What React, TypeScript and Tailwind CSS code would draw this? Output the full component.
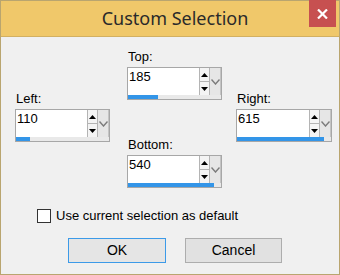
import React from 'react';

type SpinProps = { label: string; value: string; fill: number; wide?: boolean };

function SpinField({ label, value, fill, wide }: SpinProps) {
  return (
    <div className="flex flex-col">
      <div className="h-[16px] leading-[16px] pl-[1px] text-[13px] text-black">{label}</div>
      <div className={`mt-[2px] flex h-[33px] flex-col border border-[#a7a7a7] bg-white ${wide ? 'w-[96px]' : 'w-[95px]'}`}>
        <div className="flex flex-1">
          <div className="flex-1 pl-[1px] pt-[1px] text-[13px] leading-[16px] text-black">{value}</div>
          <div className="flex w-[11px] flex-col border-x border-[#b4b4b4] bg-[#f4f4f4]">
            <div className="flex flex-1 items-center justify-center border-b border-[#b4b4b4]">
              <svg width="7" height="4" viewBox="0 0 7 4">
                <path d="M0 4 L3.5 0 L7 4 Z" fill="#000" />
              </svg>
            </div>
            <div className="flex flex-1 items-center justify-center">
              <svg width="7" height="4" viewBox="0 0 7 4">
                <path d="M0 0 L3.5 4 L7 0 Z" fill="#000" />
              </svg>
            </div>
          </div>
          <div className="flex w-[11px] items-center justify-center border-r border-[#c4c4c4] bg-[#e6e6e6]">
            <svg width="9" height="6" viewBox="0 0 9 6">
              <path d="M0.5 0.5 L4.5 5 L8.5 0.5" fill="none" stroke="#7b7b7b" strokeWidth="1.4" />
            </svg>
          </div>
        </div>
        <div className="h-[4px] bg-[#e9e9e9]">
          <div className="h-full bg-[#3395e8]" style={{ width: `${fill}px` }} />
        </div>
      </div>
    </div>
  );
}

export default function App() {
  return (
    <div
      className="flex h-[275px] w-[340px] flex-col border border-[#b9a56f] bg-[#f0f0f0]"
      style={{ fontFamily: '"Liberation Sans", Arial, sans-serif' }}
    >
      {/* title bar */}
      <div className="relative flex h-[36px] items-center justify-center border-b border-[#d2b062] bg-[#f0c86a]">
        <span
          className="pl-[10px] text-[18px] text-[#2a2a2a]"
          style={{ fontFamily: '"Noto Sans", "Open Sans", sans-serif' }}
        >
          Custom Selection
        </span>
        <div className="absolute right-[3px] top-[-1px] flex h-[27px] w-[27px] items-center justify-center bg-[#c75050]">
          <svg width="11" height="10" viewBox="0 0 11 10">
            <path d="M1 0.5 L10 9.5 M10 0.5 L1 9.5" stroke="#fff" strokeWidth="2.2" />
          </svg>
        </div>
      </div>

      {/* body */}
      <div className="flex flex-1 flex-col">
        <div className="flex items-center pl-[14px] pt-[12px]">
          <div className="mb-[4px]">
            <SpinField label="Left:" value="110" fill={14} />
          </div>
          <div className="ml-[17px] flex flex-col gap-[37px]">
            <SpinField label="Top:" value="185" fill={30} />
            <SpinField label="Bottom:" value="540" fill={86} />
          </div>
          <div className="mb-[4px] ml-[14px]">
            <SpinField label="Right:" value="615" fill={87} wide />
          </div>
        </div>

        <label className="ml-[36px] mt-[20px] flex items-center gap-[5px] text-[13px] leading-[16px] text-black">
          <span className="h-[14px] w-[14px] border border-[#333] bg-white" />
          Use current selection as default
        </label>

        <div className="ml-[67px] mt-[14px] flex gap-[19px]">
          <button className="h-[25px] w-[98px] border border-[#3c9ae8] bg-[#e5e5e5] text-[14px] text-black">
            OK
          </button>
          <button className="h-[25px] w-[97px] border border-[#adadad] bg-[#e1e1e1] text-[14px] text-black">
            Cancel
          </button>
        </div>
      </div>
    </div>
  );
}
